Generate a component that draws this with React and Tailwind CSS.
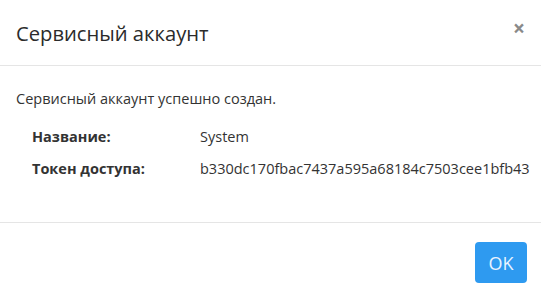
export default function App() {
  return (
    <div className="w-[541px] h-[299px] bg-white text-[#333] font-['Open_Sans',sans-serif] flex flex-col">
      <div className="h-[66px] border-b border-[#e5e5e5] flex items-center justify-between pl-[16px] pr-[16px]">
        <h4 className="text-[20.2px] text-[#2b2b2b] leading-none pt-[1px]">Сервисный аккаунт</h4>
        <button className="text-[21px] text-[#8a8a8a] font-bold leading-none -mt-[9px]">×</button>
      </div>
      <div className="h-[157px] border-b border-[#e5e5e5] px-[16px] pt-[23px] text-[14.5px]">
        <p className="leading-[20px]">Сервисный аккаунт успешно создан.</p>
        <div className="mt-[18px] pl-[16px] flex flex-col gap-[12px]">
          <div className="flex leading-[20px]">
            <span className="w-[168px] shrink-0 font-bold">Название:</span>
            <span className="whitespace-nowrap">System</span>
          </div>
          <div className="flex leading-[20px]">
            <span className="w-[168px] shrink-0 font-bold">Токен доступа:</span>
            <span className="whitespace-nowrap">b330dc170fbac7437a595a68184c7503cee1bfb43</span>
          </div>
        </div>
      </div>
      <div className="flex justify-end pr-[14px] pt-[19px]">
        <button className="w-[52px] h-[41px] rounded-[4px] bg-[#2e9af0] text-[#e8f3ff] text-[18px] leading-none">OK</button>
      </div>
    </div>
  );
}
